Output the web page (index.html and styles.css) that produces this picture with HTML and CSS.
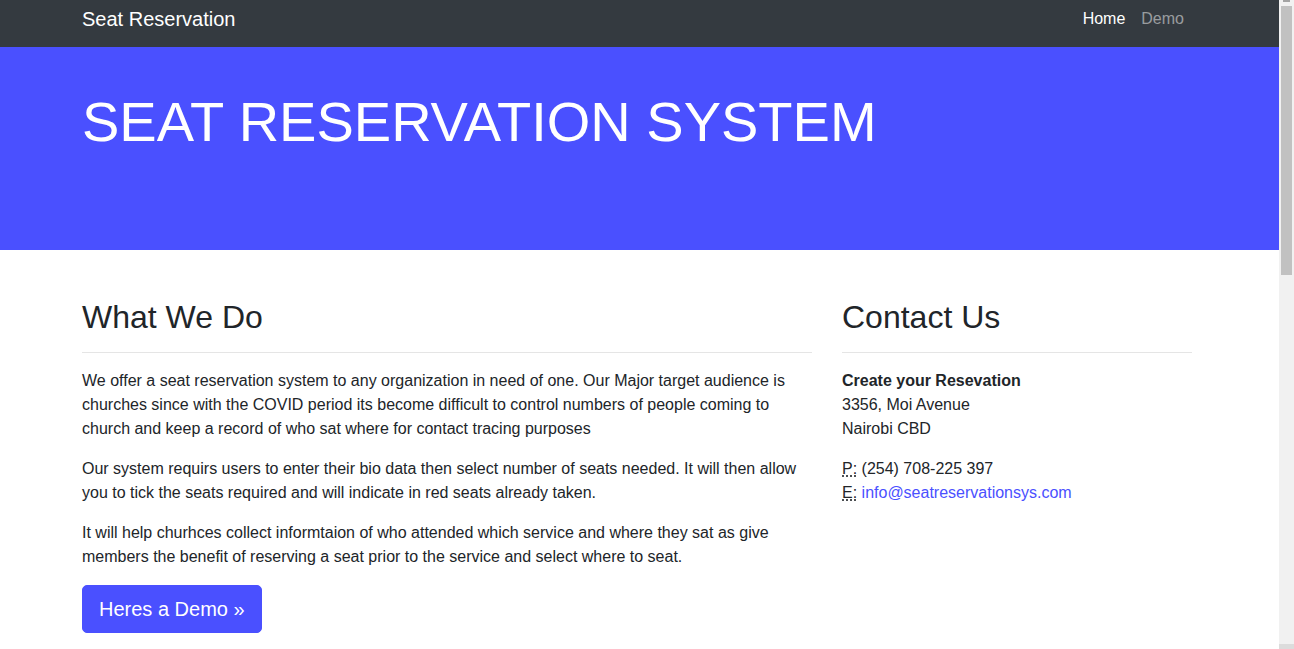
FILE: index.html
```html
<!DOCTYPE html>
<html lang="en">
<head>
<meta charset="utf-8">
<title>Seat Reservation</title>
<link rel="stylesheet" href="styles.css">
</head>
<body>
  <div class="page">
    <nav class="navbar">
      <div class="container nav-inner">
        <a class="brand" href="#">Seat Reservation</a>
        <ul class="nav-links">
          <li><a class="nav-link active" href="#">Home</a></li>
          <li><a class="nav-link" href="#">Demo</a></li>
        </ul>
      </div>
    </nav>

    <header class="hero">
      <div class="container">
        <h1 class="hero-title">SEAT RESERVATION SYSTEM</h1>
      </div>
    </header>

    <main class="container main">
      <div class="row">
        <section class="col-main">
          <h2 class="section-title">What We Do</h2>
          <hr class="divider">
          <p>We offer a seat reservation system to any organization in need of one. Our Major target audience is churches since with the COVID period its become difficult to control numbers of people coming to church and keep a record of who sat where for contact tracing purposes</p>
          <p>Our system requirs users to enter their bio data then select number of seats needed. It will then allow you to tick the seats required and will indicate in red seats already taken.</p>
          <p>It will help churhces collect informtaion of who attended which service and where they sat as give members the benefit of reserving a seat prior to the service and select where to seat.</p>
          <a class="btn" href="#">Heres a Demo &raquo;</a>
        </section>
        <section class="col-side">
          <h2 class="section-title">Contact Us</h2>
          <hr class="divider">
          <address class="address">
            <strong>Create your Resevation</strong><br>
            3356, Moi Avenue<br>
            Nairobi CBD
          </address>
          <address class="address">
            <abbr title="Phone">P:</abbr> (254) 708-225 397<br>
            <abbr title="Email">E:</abbr> <a class="link" href="#">info@seatreservationsys.com</a>
          </address>
        </section>
      </div>
    </main>
  </div>

  <div class="scrollbar" aria-hidden="true">
    <div class="scroll-up"></div>
    <div class="scroll-thumb"></div>
    <div class="scroll-down"></div>
  </div>
</body>
</html>
```

FILE: styles.css
```css
* { box-sizing: border-box; }

html, body {
  margin: 0;
  padding: 0;
}

body {
  font-family: "Liberation Sans", Arial, sans-serif;
  font-size: 16px;
  line-height: 1.5;
  color: #212529;
  background: #fff;
}

.page {
  margin-right: 15px;
  min-height: 1540px;
}

a { text-decoration: none; }

.container {
  max-width: 1145px;
  margin: 0 auto;
  padding: 0 20px 0 15px;
}

.navbar {
  background: #343a40;
  height: 47px;
}

.nav-inner {
  display: flex;
  align-items: center;
  justify-content: space-between;
  height: 100%;
}

.brand {
  color: #fff;
  font-size: 20px;
  line-height: 30px;
  margin-top: -10px;
}

.nav-links {
  list-style: none;
  display: flex;
  margin: 0;
  padding: 0;
  margin-top: -10px;
  margin-right: 0;
}

.nav-link {
  display: block;
  padding: 0 8px;
  color: rgba(255, 255, 255, 0.5);
  font-size: 16px;
  line-height: 24px;
}

.nav-link.active { color: #fff; }

.hero {
  background: #4a50ff;
  height: 203px;
  padding-top: 41px;
}

.hero-title {
  margin: 0;
  color: #fff;
  font-size: 56px;
  font-weight: 300;
  line-height: 1.2;
}

.main {
  padding-top: 48px;
  padding-bottom: 48px;
}

.row {
  display: flex;
  gap: 30px;
}

.col-main { width: 730px; }
.col-side { width: 350px; }

.section-title {
  margin: 0 0 8px;
  font-size: 32px;
  font-weight: 500;
  line-height: 1.2;
}

.divider {
  border: 0;
  border-top: 1px solid rgba(0, 0, 0, 0.1);
  margin: 16px 0 16px;
}

p {
  margin: 0 0 16px;
}

.btn {
  display: inline-block;
  background: #4a50ff;
  border: 1px solid #4a50ff;
  color: #fff;
  font-size: 20px;
  line-height: 30px;
  padding: 8px 16px;
  border-radius: 5px;
}

.address {
  font-style: normal;
  margin: 0 0 16px;
}

abbr {
  text-decoration: underline dotted;
  cursor: help;
}

.link { color: #4a50ff; }

.scrollbar {
  position: fixed;
  top: 0;
  right: 0;
  width: 15px;
  height: 100vh;
  background: #f1f1f1;
  display: flex;
  flex-direction: column;
  align-items: center;
}

.scroll-up {
  width: 7px;
  height: 2px;
  background: #a3a3a3;
  flex: none;
}

.scroll-thumb {
  width: 11px;
  height: 269px;
  margin-top: 4px;
  background: #c1c1c1;
  flex: none;
}

.scroll-down {
  margin-top: auto;
  width: 15px;
  height: 5px;
  background: #dcdcdc;
  flex: none;
}
```
